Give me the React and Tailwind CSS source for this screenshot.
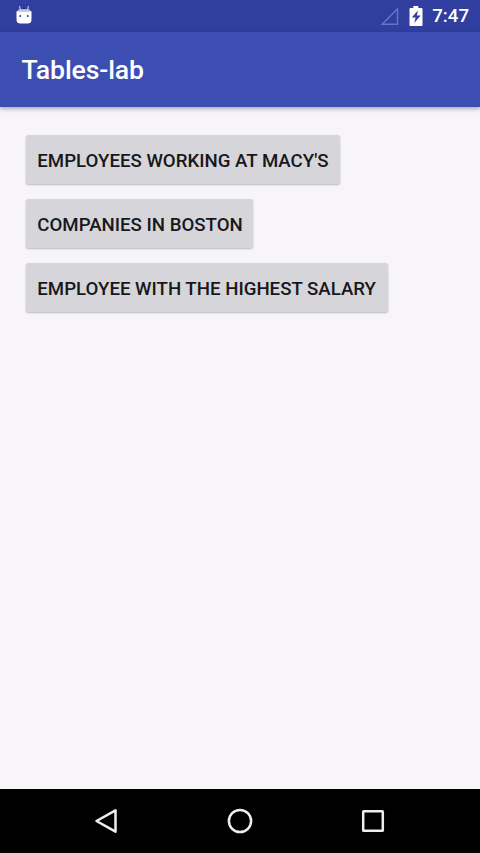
const actions = [
  { label: "Employees working at Macy's", width: 'w-[314px]' },
  { label: 'Companies in Boston', width: 'w-[227px]' },
  { label: 'Employee with the highest salary', width: 'w-[361.5px]' },
];

function StatusBar() {
  return (
    <div className="flex h-8 shrink-0 items-center bg-[#303f9f] pl-4 pr-[11px] text-white">
      <svg className="h-5 w-4" viewBox="0 0 16 20" fill="none">
        <path d="M3.6 0 4.4 4M12.4 0 11.6 4" stroke="currentColor" strokeWidth="1" opacity=".8" />
        <path d="M2.5 3.300h11v1.500h-11z" fill="#d5d5df" />
        <path d="M.5 6.200Q.5 4.800 2 4.800h12q1.500 0 1.500 1.400v7.500q0 3.800-3.800 3.800H4.300Q.5 17.500.5 13.700z" fill="currentColor" />
        <path d="M2.500 5.400h11" stroke="#aaaac0" strokeWidth=".7" />
        <circle cx="4.200" cy="10" r="1" fill="#303f9f" />
        <circle cx="11.800" cy="10" r="1" fill="#303f9f" />
      </svg>
      <div className="ml-auto flex items-center">
        <svg className="h-5 w-[19px]" viewBox="0 0 19 20" fill="none">
          <path d="M2.200 18.200 17.500 2.800v15.400z" stroke="#6673c5" strokeWidth="1.500" />
        </svg>
        <svg className="ml-[10px] h-5 w-[14px]" viewBox="0 0 14 20">
          <path d="M4.300 0h5v2h3.200q1 0 1 1v16q0 1-1 1h-11q-1 0-1-1V3q0-1 1-1h2.800z" fill="currentColor" />
          <path d="m8.800 4.500-6 7h3.800L5.200 17l6.500-7.500H7.900z" fill="#303f9f" />
        </svg>
        <time className="ml-[9px] pt-px text-[18.67px] font-medium leading-none">7:47</time>
      </div>
    </div>
  );
}

function NavigationBar() {
  return (
    <nav className="flex h-16 shrink-0 items-center justify-center gap-[108px] bg-black text-[#eee]">
      <svg className="h-6 w-6" viewBox="0 0 24 24" fill="none" stroke="currentColor" strokeWidth="2.500" strokeLinejoin="round">
        <path d="M20.500 1.300v21.400L1.500 12z" />
      </svg>
      <svg className="h-[26px] w-[26px]" viewBox="0 0 26 26" fill="none" stroke="currentColor" strokeWidth="2.500">
        <circle cx="13" cy="13" r="11.100" />
      </svg>
      <svg className="h-6 w-6" viewBox="0 0 24 24" fill="none" stroke="currentColor" strokeWidth="2.500" strokeLinejoin="round">
        <rect x="2.200" y="2.200" width="19.600" height="19.600" rx=".6" />
      </svg>
    </nav>
  );
}

export default function App() {
  return (
    <div className="flex h-[853px] w-[480px] flex-col overflow-hidden bg-[#f7f5fa] font-[Roboto,sans-serif]">
      <StatusBar />
      <header className="flex h-[74.500px] shrink-0 items-center bg-[#3d4eb3] pl-[21.500px] pt-px shadow-[0_2px_4px_rgba(0,0,0,0.3)]">
        <h1 className="text-[26.67px] font-medium leading-8 tracking-[-0.15px] text-white">Tables-lab</h1>
      </header>
      <main className="flex flex-1 flex-col items-start gap-[15px] pl-[26.300px] pt-[28.800px]">
        {actions.map(({ label, width }) => (
          <button
            key={label}
            className={`${width} h-[49px] whitespace-nowrap rounded-[2.500px] bg-[#d6d5d9] pl-[11px] pt-[2px] text-left text-[18.67px] font-medium uppercase leading-6 text-[#18181b] shadow-[0_1px_2px_rgba(0,0,0,0.24)]`}
          >
            {label}
          </button>
        ))}
      </main>
      <NavigationBar />
    </div>
  );
}
